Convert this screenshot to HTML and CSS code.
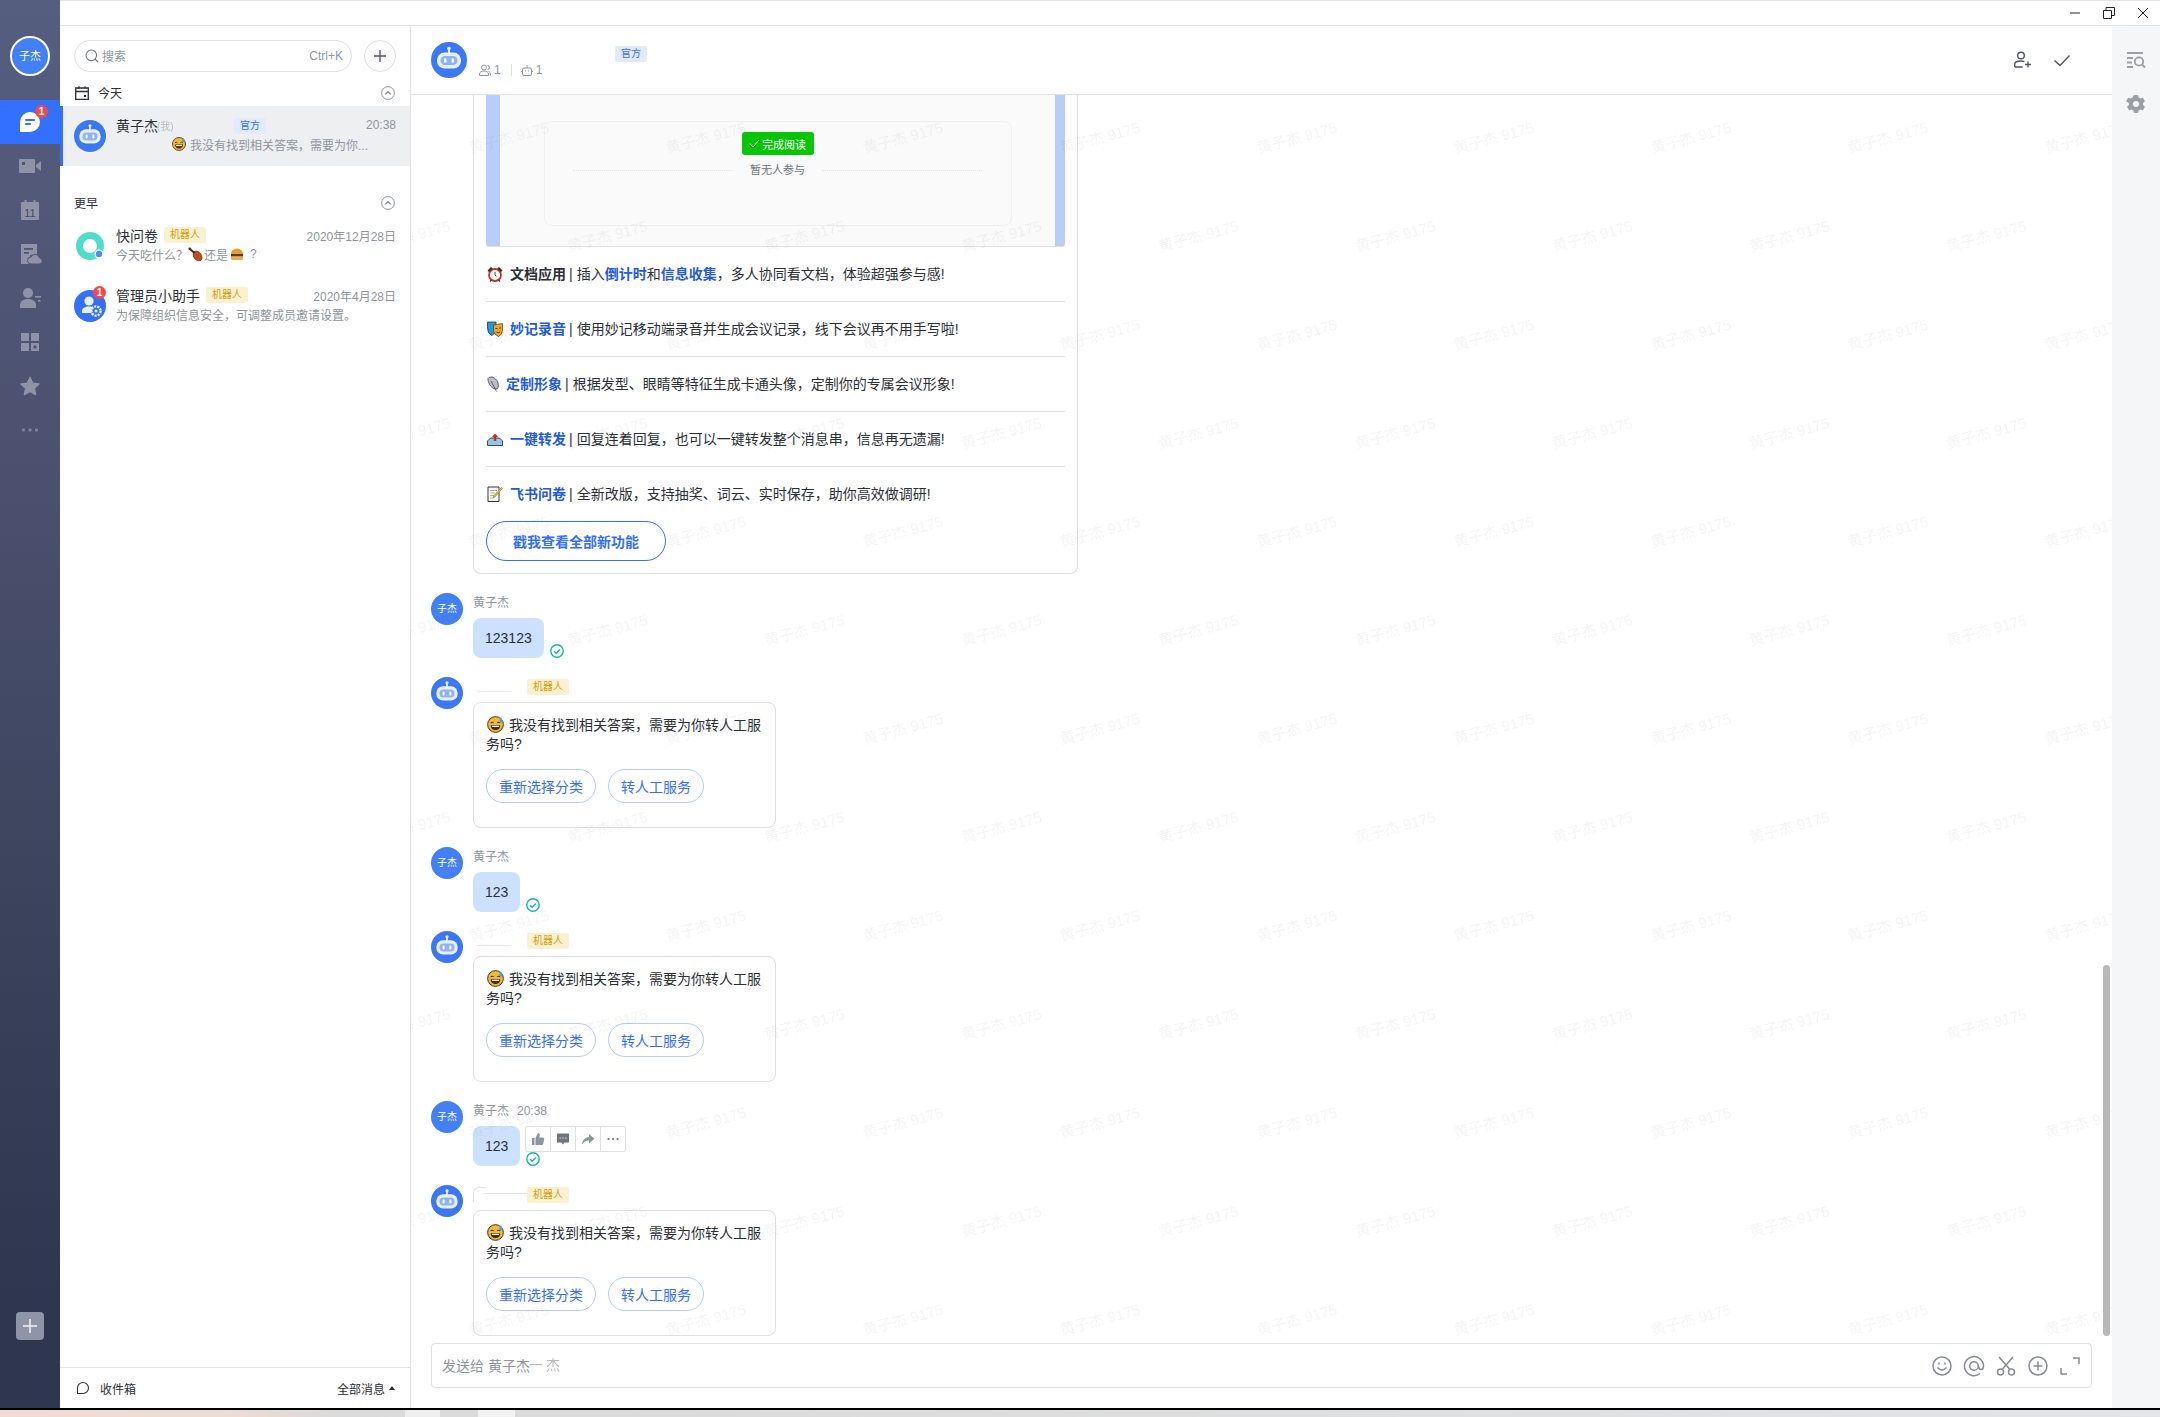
FILE: index.html
```html
<!DOCTYPE html>
<html lang="zh-CN">
<head>
  <meta charset="UTF-8" />
  <title>飞书</title>
  <link rel="stylesheet" href="styles.css">
</head>
<body>
  <!-- shared icons -->
  <svg class="defs" width="0" height="0">
    <defs>
      <symbol id="robot" viewBox="0 0 36 36">
        <circle cx="18" cy="18" r="18" fill="#3b78f2"/>
        <rect x="17" y="6" width="2" height="5" fill="#e8effd"/>
        <circle cx="18" cy="6.5" r="1.8" fill="#e8effd"/>
        <rect x="6" y="10.5" width="24" height="16" rx="7.5" fill="#e8effd"/>
        <rect x="9.5" y="14" width="17" height="9" rx="4.5" fill="#8fb3f7"/>
        <rect x="13" y="16.2" width="2.4" height="4.6" rx="1.2" fill="#fff"/>
        <rect x="20.6" y="16.2" width="2.4" height="4.6" rx="1.2" fill="#fff"/>
      </symbol>
      <symbol id="sweat" viewBox="0 0 16 16">
        <circle cx="8" cy="8" r="7.4" fill="#f7b733" stroke="#3a2c14" stroke-width=".9"/>
        <path d="M3.4 6.6q1.4-1.6 2.8 0M9.6 6.6q1.4-1.6 2.8 0" fill="none" stroke="#3a2c14" stroke-width="1"/>
        <path d="M3.4 8.6h9.2q-.4 4.6-4.6 4.6T3.4 8.6z" fill="#4a2410"/>
        <path d="M4.6 9.2h6.8v1.2H4.6z" fill="#fff"/>
        <path d="M13 1.2q2 2.2 1.6 3.4a1.5 1.5 0 0 1-3 0Q11.400 3.400 13 1.200z" fill="#3da5e8"/>
      </symbol>
      <symbol id="tick" viewBox="0 0 14 14">
        <circle cx="7" cy="7" r="6.2" fill="none" stroke="#14b8a0" stroke-width="1.400"/>
        <path d="M4.200 7.200l2 2 3.600-3.800" fill="none" stroke="#14b8a0" stroke-width="1.400"/>
      </symbol>
      <symbol id="chevron" viewBox="0 0 14 14">
        <circle cx="7" cy="7" r="6.400" fill="none" stroke="#8f959e"/>
        <path d="M4.300 8.300L7 5.500l2.700 2.800" fill="none" stroke="#767b84" stroke-width="1.200"/>
      </symbol>
    </defs>
  </svg>

  <div class="app">
    <aside class="rail">
      <div class="me">子杰</div>
      <nav class="rail-nav">
        <a class="rail-item active">
          <svg width="24" height="24" viewBox="0 0 24 24"><path d="M12 2a10 10 0 0 1 0 20H3a1 1 0 0 1-1-1v-9A10 10 0 0 1 12 2z" fill="#fff"/><rect x="7" y="9" width="10" height="2" rx="1" fill="#3370ff"/><rect x="7" y="13" width="6" height="2" rx="1" fill="#3370ff"/></svg>
          <span class="badge">1</span>
        </a>
        <a class="rail-item">
          <svg width="24" height="24" viewBox="0 0 24 24"><rect x="1" y="5" width="16" height="14" rx="1" fill="#8e93a8"/><rect x="4" y="8" width="3" height="3" fill="#4f5672"/><path d="M18 11l5-4v10l-5-4z" fill="#8e93a8"/></svg>
        </a>
        <a class="rail-item">
          <svg width="24" height="24" viewBox="0 0 24 24"><rect x="3" y="4" width="18" height="18" rx="1" fill="#8e93a8"/><rect x="6.500" y="2" width="2" height="4" fill="#8e93a8"/><rect x="15.500" y="2" width="2" height="4" fill="#8e93a8"/><text x="12" y="18.500" class="cal-num">11</text></svg>
        </a>
        <a class="rail-item">
          <svg width="24" height="24" viewBox="0 0 24 24"><path d="M3 2h16v11H3z" fill="#8e93a8"/><path d="M3 13h9v9H3z" fill="#8e93a8"/><rect x="6" y="6" width="9" height="1.800" fill="#4f5672"/><rect x="6" y="10" width="5" height="1.800" fill="#4f5672"/><path d="M13 22h8a3 3 0 0 0 .5-6 4.500 4.500 0 0 0-8.500-1 3.500 3.500 0 0 0 0 7z" fill="#8e93a8" stroke="#4f5672"/></svg>
        </a>
        <a class="rail-item">
          <svg width="24" height="24" viewBox="0 0 24 24"><circle cx="10" cy="7" r="5" fill="#8e93a8"/><path d="M2 22v-3c0-4 4-6 8-6s8 2 8 6v3z" fill="#8e93a8"/><rect x="17" y="10" width="6" height="1.600" fill="#8e93a8"/><rect x="20" y="14" width="2.500" height="1.600" fill="#8e93a8"/></svg>
        </a>
        <a class="rail-item">
          <svg width="24" height="24" viewBox="0 0 24 24" fill="#8e93a8"><rect x="3" y="3" width="8" height="8"/><rect x="13" y="3" width="8" height="8"/><rect x="3" y="13" width="8" height="8"/><path d="M13 13h8v8h-8zM15.500 15.500v3h3v-3z" fill-rule="evenodd"/></svg>
        </a>
        <a class="rail-item">
          <svg width="24" height="24" viewBox="0 0 24 24"><path d="M12 3.500l2.700 5.800 6.300.7-4.700 4.300 1.300 6.200-5.600-3.200-5.600 3.200 1.300-6.200L3 10l6.300-.7z" fill="#8e93a8" stroke="#8e93a8" stroke-linejoin="round" stroke-width="1.500"/></svg>
        </a>
        <a class="rail-item">
          <svg width="24" height="24" viewBox="0 0 24 24" fill="#7f859c"><rect x="4" y="10.500" width="3" height="3" rx="1"/><rect x="10.500" y="10.500" width="3" height="3" rx="1"/><rect x="17" y="10.500" width="3" height="3" rx="1"/></svg>
        </a>
      </nav>
      <button class="rail-add">
        <svg width="16" height="16" viewBox="0 0 16 16"><path d="M8 1v14M1 8h14" stroke="#f2f3f6" stroke-width="1.500"/></svg>
      </button>
    </aside>

    <div class="window">
      <div class="titlebar">
        <svg width="12" height="12" viewBox="0 0 12 12"><path d="M1 6h10" stroke="#222"/></svg>
        <svg width="12" height="12" viewBox="0 0 12 12"><path d="M.5 3.500h8v8h-8zM3 3.500v-3h8.500v8h-3" fill="none" stroke="#222"/></svg>
        <svg width="12" height="12" viewBox="0 0 12 12"><path d="M1 1l10 10M11 1L1 11" stroke="#222"/></svg>
      </div>

      <div class="content">
        <section class="chats">
          <div class="search-row">
            <div class="search">
              <svg width="14" height="14" viewBox="0 0 14 14"><circle cx="6.300" cy="6.300" r="5.300" fill="none" stroke="#6f747d" stroke-width="1.100"/><path d="M10 10l3 3" stroke="#6f747d" stroke-width="1.100"/></svg>
              <span class="search-label">搜索</span>
              <span class="search-key">Ctrl+K</span>
            </div>
            <button class="plus">
              <svg width="16" height="16" viewBox="0 0 16 16"><path d="M8 2v12M2 8h12" stroke="#555a63" stroke-width="1.400"/></svg>
            </button>
          </div>

          <div class="group-head">
            <svg width="14" height="14" viewBox="0 0 14 14"><path d="M.7 2h12.600v11.300H.7zM.7 5.500h12.600" fill="none" stroke="#2b2f36" stroke-width="1.300"/><rect x="3.300" y=".3" width="1.300" height="2.500" fill="#2b2f36"/><rect x="9.400" y=".3" width="1.300" height="2.500" fill="#2b2f36"/><rect x="9" y="9" width="2" height="2" fill="#2b2f36"/></svg>
            <span class="group-title">今天</span>
            <svg class="group-toggle" width="14" height="14"><use href="#chevron"/></svg>
          </div>
          <div class="chat-row selected">
            <svg class="chat-avatar" width="32" height="32"><use href="#robot"/></svg>
            <div class="chat-body">
              <div class="chat-line">
                <span class="chat-name">黄子杰</span><span class="smudge">(我)</span>
                <span class="tag tag-blue tag-fixed">官方</span>
                <span class="chat-time">20:38</span>
              </div>
              <div class="chat-sub chat-sub-indent">
                <svg width="14" height="14"><use href="#sweat"/></svg>
                <span>我没有找到相关答案，需要为你...</span>
              </div>
            </div>
          </div>

          <div class="group-head later">
            <span class="group-title plain">更早</span>
            <svg class="group-toggle" width="14" height="14"><use href="#chevron"/></svg>
          </div>
          <div class="chat-row">
            <svg class="chat-avatar" width="32" height="32" viewBox="0 0 32 32"><circle cx="16" cy="16" r="10.500" fill="none" stroke="#4fdcc8" stroke-width="7"/><circle cx="25" cy="24" r="4.500" fill="#fff"/><circle cx="25" cy="24" r="3.200" fill="#4c8df6"/></svg>
            <div class="chat-body">
              <div class="chat-line">
                <span class="chat-name">快问卷</span>
                <span class="tag tag-bot">机器人</span>
                <span class="chat-time">2020年12月28日</span>
              </div>
              <div class="chat-sub">
                <span>今天吃什么？</span>
                <svg class="drumstick" width="15" height="15" viewBox="0 0 15 15"><path d="M6 4.500c2-1 4.500-.3 6.500 2 2 2.500 2 5.500.5 6.700-1.500 1.200-4.500.5-6.500-1.700C5 9.800 4.500 6.500 6 4.500z" fill="#b8501c" stroke="#5a2a10" stroke-width=".6"/><path d="M6.500 6L2.500 2.500" stroke="#3a2c20" stroke-width="1.800"/><circle cx="1.800" cy="1.800" r="1.400" fill="#3a2c20"/></svg>
                <span>还是</span>
                <svg class="burger" width="14" height="14" viewBox="0 0 14 14"><path d="M1 7a6 5.500 0 0 1 12 0z" fill="#e3a032"/><rect x="1" y="7" width="12" height="2.500" fill="#6b3515"/><path d="M1 10h12v1.500a1.500 1.500 0 0 1-1.500 1.500h-9A1.500 1.500 0 0 1 1 11.500z" fill="#e8ae4a"/></svg>
                <span class="trail">?</span>
              </div>
            </div>
          </div>
          <div class="chat-row">
            <div class="chat-avatar admin">
              <svg width="32" height="32" viewBox="0 0 32 32"><circle cx="16" cy="16" r="16" fill="#3370ff"/><circle cx="15" cy="11" r="4.600" fill="#e8effd"/><path d="M8 23v-2c0-3 3-4.500 7-4.500s7 1.500 7 4.500v2z" fill="#e8effd"/><circle cx="22" cy="21" r="4.600" fill="#3370ff" stroke="#e8effd" stroke-width="2.400" stroke-dasharray="2.200 1"/><circle cx="22" cy="21" r="1.500" fill="#e8effd"/></svg>
              <span class="badge badge-ring">1</span>
            </div>
            <div class="chat-body">
              <div class="chat-line">
                <span class="chat-name">管理员小助手</span>
                <span class="tag tag-bot">机器人</span>
                <span class="chat-time">2020年4月28日</span>
              </div>
              <div class="chat-sub">
                <span>为保障组织信息安全，可调整成员邀请设置。</span>
              </div>
            </div>
          </div>

          <div class="inbox">
            <svg width="14" height="14" viewBox="0 0 14 14"><path d="M7 1.500a5.500 5.500 0 0 1 0 11H1.500V7A5.500 5.500 0 0 1 7 1.500z" fill="none" stroke="#2b2f36" stroke-width="1.100"/></svg>
            <span class="inbox-label">收件箱</span>
            <span class="inbox-filter">全部消息</span>
            <span class="caret"></span>
          </div>
        </section>

        <main class="conv">
          <header class="conv-head">
            <svg width="36" height="36"><use href="#robot"/></svg>
            <div class="conv-info">
              <div class="conv-title"><span class="tag tag-blue">官方</span></div>
              <div class="conv-meta">
                <svg width="12" height="12" viewBox="0 0 12 12"><circle cx="5" cy="3.500" r="2.500" fill="none" stroke="#8f959e"/><path d="M.5 11.500v-1.500c0-2 2-3 4.500-3s4.500 1 4.500 3v1.500zM8.500 1.500a2 2 0 0 1 0 4M9.500 7.500c1.300.4 2 1.200 2 2.500v1.500" fill="none" stroke="#8f959e"/></svg>
                <span>1</span>
                <i class="meta-sep"></i>
                <svg width="12" height="12" viewBox="0 0 12 12"><rect x="1.500" y="4" width="9" height="7.500" rx="1.500" fill="none" stroke="#8f959e"/><path d="M6 1v3M0 7.500h1.500M10.500 7.500H12M4 7h1M7 7h1" stroke="#8f959e"/></svg>
                <span>1</span>
              </div>
            </div>
            <div class="conv-actions">
              <svg width="20" height="20" viewBox="0 0 20 20"><circle cx="9" cy="5.500" r="3.300" fill="none" stroke="#51565d" stroke-width="1.400"/><path d="M2.700 17v-2.500c0-2.300 2.600-3.500 6-3.500 1.400 0 2.700.2 3.700.7M2.700 17h8M13 14.500h6M16 11.500v6" fill="none" stroke="#51565d" stroke-width="1.400"/></svg>
              <svg width="20" height="20" viewBox="0 0 20 20"><path d="M2.500 10.500l5.500 5 9.500-10" fill="none" stroke="#51565d" stroke-width="1.400"/></svg>
            </div>
          </header>

          <div class="messages">
            <div class="msg">
              <svg class="msg-avatar" width="32" height="32"><use href="#robot"/></svg>
              <div class="msg-main">
                <div class="card news">
                  <div class="preview">
                    <div class="preview-box">
                      <span class="read-btn">
                        <svg width="11" height="11" viewBox="0 0 11 11"><path d="M1 5.500l3 3.500 6-7" fill="none" stroke="#fff"/></svg>
                        完成阅读
                      </span>
                      <div class="preview-note"><i></i><span>暂无人参与</span><i></i></div>
                    </div>
                  </div>
                  <div class="feat">
                    <svg class="feat-icon" width="16" height="16" viewBox="0 0 16 16"><circle cx="8" cy="9" r="6" fill="#fff" stroke="#c8321e" stroke-width="1.800"/><path d="M.5 4.500L4 1l1.800 1.500L2 6zM15.500 4.500L12 1l-1.800 1.500L14 6z" fill="#3a2c20"/><path d="M8 6v3.200l1.500 1" fill="none" stroke="#444"/><path d="M3 15.500l1.500-1.500M13 15.500L11.500 14" stroke="#333" stroke-width="1.200"/></svg>
                    <b>文档应用</b><span class="bar">|</span><span>插入</span><a>倒计时</a><span>和</span><a>信息收集</a><span>，多人协同看文档，体验超强参与感!</span>
                  </div>
                  <div class="feat">
                    <svg class="feat-icon" width="16" height="16" viewBox="0 0 16 16"><path d="M.5 1h8.500v6.500q0 5-4.500 7Q.5 12.500.5 7z" fill="#1e9bd8" stroke="#223" stroke-width=".7"/><path d="M6.500 4l9-1.500V9.500q-.5 4.500-4 6-4.500-1.500-5-6z" fill="#f2a51f" stroke="#532" stroke-width=".7"/><path d="M8.500 7.500h2M12 7h2M9.500 11q1.500 1.500 3.500 0" fill="none" stroke="#532"/></svg>
                    <a>妙记录音</a><span class="bar">|</span><span>使用妙记移动端录音并生成会议记录，线下会议再不用手写啦!</span>
                  </div>
                  <div class="feat">
                    <svg class="feat-icon narrow" width="12" height="16" viewBox="0 0 12 16"><path d="M1 2.500c2-3 7-1.500 9.500 3 1.500 3 1.200 6-.5 7.500-4 1-9.500-5-9-10.500z" fill="#b9bcc0" stroke="#44474c" stroke-width=".8"/><path d="M4 5l5.500 10.500" stroke="#44474c" stroke-width=".8"/></svg>
                    <a>定制形象</a><span class="bar">|</span><span>根据发型、眼睛等特征生成卡通头像，定制你的专属会议形象!</span>
                  </div>
                  <div class="feat">
                    <svg class="feat-icon" width="16" height="16" viewBox="0 0 16 16"><path d="M.5 10l3-3h9l3 3v4.500H.5z" fill="#8ec7ea" stroke="#223" stroke-width=".8"/><path d="M8 2.500l3 3.500H9.200v4H6.800V6H5z" fill="#c92d1f"/></svg>
                    <a>一键转发</a><span class="bar">|</span><span>回复连着回复，也可以一键转发整个消息串，信息再无遗漏!</span>
                  </div>
                  <div class="feat last">
                    <svg class="feat-icon" width="16" height="16" viewBox="0 0 16 16"><path d="M1 1h11v14.500H1z" fill="#fff" stroke="#333"/><path d="M3 4.500h7M3 7h5M3 9.500h4M3 12h3" stroke="#999" stroke-width=".8"/><path d="M14.500 1.500l1 1L8 11l-2 1 .7-2.200z" fill="#f2bd3a" stroke="#7a5a10" stroke-width=".5"/></svg>
                    <a>飞书问卷</a><span class="bar">|</span><span>全新改版，支持抽奖、词云、实时保存，助你高效做调研!</span>
                  </div>
                  <button class="all-btn">戳我查看全部新功能</button>
                </div>
              </div>
            </div>

            <div class="msg">
              <div class="msg-avatar user">子杰</div>
              <div class="msg-main">
                <div class="msg-head"><span class="msg-name">黄子杰</span></div>
                <div class="bubble-row">
                  <div class="bubble">123123</div>
                  <svg width="14" height="14"><use href="#tick"/></svg>
                </div>
              </div>
            </div>

            <div class="msg">
              <svg class="msg-avatar" width="32" height="32"><use href="#robot"/></svg>
              <div class="msg-main">
                <div class="msg-head bot"><i class="name-line"></i><span class="tag tag-bot">机器人</span></div>
                <div class="card reply">
                  <p class="reply-text"><svg width="17" height="17"><use href="#sweat"/></svg>我没有找到相关答案，需要为你转人工服务吗?</p>
                  <div class="reply-btns"><button>重新选择分类</button><button>转人工服务</button></div>
                </div>
              </div>
            </div>

            <div class="msg">
              <div class="msg-avatar user">子杰</div>
              <div class="msg-main">
                <div class="msg-head"><span class="msg-name">黄子杰</span></div>
                <div class="bubble-row">
                  <div class="bubble">123</div>
                  <svg width="14" height="14"><use href="#tick"/></svg>
                </div>
              </div>
            </div>

            <div class="msg">
              <svg class="msg-avatar" width="32" height="32"><use href="#robot"/></svg>
              <div class="msg-main">
                <div class="msg-head bot"><i class="name-line"></i><span class="tag tag-bot">机器人</span></div>
                <div class="card reply">
                  <p class="reply-text"><svg width="17" height="17"><use href="#sweat"/></svg>我没有找到相关答案，需要为你转人工服务吗?</p>
                  <div class="reply-btns"><button>重新选择分类</button><button>转人工服务</button></div>
                </div>
              </div>
            </div>

            <div class="msg">
              <div class="msg-avatar user">子杰</div>
              <div class="msg-main">
                <div class="msg-head"><span class="msg-name">黄子杰</span><span class="msg-time">20:38</span></div>
                <div class="bubble-row">
                  <div class="bubble">123</div>
                  <div class="bubble-side">
                    <div class="msg-tools">
                      <span><svg width="14" height="14" viewBox="0 0 14 14" fill="#8f959e"><rect x="1" y="6" width="2.500" height="7"/><path d="M4.500 6l2.500-5q1.800 0 1.800 2L8.300 5.500H12q1.500 0 1.200 1.500l-1 5q-.2 1-1.200 1H4.500z"/></svg></span>
                      <span><svg width="14" height="14" viewBox="0 0 14 14"><path d="M1 1.500h12v9H8.500L7 12.500l-1.500-2H1z" fill="#6f747d"/><path d="M3.500 6h1.200M6.400 6h1.200M9.300 6h1.200" stroke="#fff"/></svg></span>
                      <span><svg width="14" height="14" viewBox="0 0 14 14"><path d="M8 2l5.500 4.800L8 11.500V8.600Q3.500 8.500 1 12.500 1.500 6 8 5z" fill="#8f959e"/></svg></span>
                      <span><svg width="14" height="14" viewBox="0 0 14 14" fill="#6f747d"><circle cx="2.500" cy="7" r="1.100"/><circle cx="7" cy="7" r="1.100"/><circle cx="11.500" cy="7" r="1.100"/></svg></span>
                    </div>
                    <svg width="14" height="14"><use href="#tick"/></svg>
                  </div>
                </div>
              </div>
            </div>

            <div class="msg">
              <svg class="msg-avatar" width="32" height="32"><use href="#robot"/></svg>
              <div class="msg-main">
                <div class="msg-head bot"><i class="name-line curved"></i><span class="tag tag-bot">机器人</span></div>
                <div class="card reply">
                  <p class="reply-text"><svg width="17" height="17"><use href="#sweat"/></svg>我没有找到相关答案，需要为你转人工服务吗?</p>
                  <div class="reply-btns"><button>重新选择分类</button><button>转人工服务</button></div>
                </div>
              </div>
            </div>

            <!-- tile is 197px, rows staggered by half -->
            <svg class="watermark" width="100%" height="100%">
              <defs>
                <pattern id="wm" width="197" height="197" patternUnits="userSpaceOnUse" patternTransform="translate(48 -7)">
                  <text x="50" y="55" text-anchor="middle" transform="rotate(-15 50 50)">黄子杰 9175</text>
                  <text x="148.500" y="153.500" text-anchor="middle" transform="rotate(-15 148.500 148.500)">黄子杰 9175</text>
                </pattern>
              </defs>
              <rect width="100%" height="100%" fill="url(#wm)"/>
            </svg>
            <div class="scroll-thumb"></div>
          </div>

          <div class="composer">
            <span class="composer-hint">发送给 黄子杰</span><span class="smudge wide">一杰</span>
            <div class="composer-tools">
              <svg width="22" height="22" viewBox="0 0 22 22" fill="none" stroke="#878d96" stroke-width="1.500"><circle cx="11" cy="11" r="9"/><path d="M6.500 12.500q4.500 5 9 0"/><path d="M8 7.500v2M14 7.500v2"/></svg>
              <svg width="22" height="22" viewBox="0 0 22 22" fill="none" stroke="#878d96" stroke-width="1.500"><path d="M17 18.500A9.500 9.500 0 1 1 20.500 11c0 2-1 3.500-2.500 3.500S15.500 13 15.500 11"/><circle cx="11" cy="11" r="4.300"/></svg>
              <svg width="22" height="22" viewBox="0 0 22 22" fill="none" stroke="#878d96" stroke-width="1.500"><circle cx="5.500" cy="17" r="3"/><circle cx="16.500" cy="17" r="3"/><path d="M7 14.500L18 2M15 14.500L4 2"/></svg>
              <svg width="22" height="22" viewBox="0 0 22 22" fill="none" stroke="#878d96" stroke-width="1.500"><circle cx="11" cy="11" r="9"/><path d="M11 6.500v9M6.500 11h9"/></svg>
              <svg width="22" height="22" viewBox="0 0 22 22" fill="none" stroke="#878d96" stroke-width="1.500"><path d="M14 3h6v6M2 13v6h6"/></svg>
            </div>
          </div>
        </main>

        <aside class="tools">
          <svg width="20" height="20" viewBox="0 0 20 20"><path d="M1 2h16M1 7h6M1 11.500h5M1 16h6" stroke="#9a9fa8" stroke-width="1.800"/><circle cx="13" cy="10.500" r="4.200" fill="none" stroke="#9a9fa8" stroke-width="1.800"/><path d="M16 13.500l3 3" stroke="#9a9fa8" stroke-width="2"/></svg>
          <svg width="20" height="20" viewBox="0 0 20 20"><path d="M8 1h4l.6 2.400 1.900 1 2.400-.7 2 3.500-1.800 1.700v2.200l1.800 1.700-2 3.500-2.400-.7-1.900 1L12 19H8l-.6-2.400-1.900-1-2.400.7-2-3.500 1.800-1.700V8.900L.1 7.200l2-3.500 2.400.7 1.900-1zM10 7a3 3 0 1 0 0 6 3 3 0 0 0 0-6z" fill="#9a9fa8" fill-rule="evenodd"/></svg>
        </aside>
      </div>
    </div>
  </div>
  <div class="desktop"></div>
</body>
</html>
```

FILE: styles.css
```css
* {
  box-sizing: border-box;
}

body {
  margin: 0;
  height: 1417px;
  display: flex;
  flex-direction: column;
  overflow: hidden;
  background: #fff;
  color: #2b2f36;
  font-family: "Liberation Sans", "Noto Sans CJK SC", sans-serif;
  font-size: 14px;
}

svg {
  display: block;
  flex: none;
}

button {
  font-family: inherit;
  cursor: pointer;
}

.defs {
  position: absolute;
}

.app {
  flex: 1;
  display: flex;
  min-height: 0;
}

/* left rail */
.rail {
  width: 60px;
  display: flex;
  flex-direction: column;
  align-items: center;
  padding-top: 36px;
  background: linear-gradient(to bottom, #565e80, #4a506d 35%, #2e374d 92%);
}

.me {
  width: 40px;
  height: 40px;
  border: 2px solid #fff;
  border-radius: 50%;
  background: #4380f5;
  color: #fff;
  font-size: 11px;
  line-height: 36px;
  text-align: center;
}

.rail-nav {
  width: 100%;
  margin-top: 24px;
}

.rail-item {
  position: relative;
  display: flex;
  align-items: center;
  justify-content: center;
  height: 44px;
}

.rail-item.active {
  background: #3370ff;
}

.cal-num {
  font-size: 11px;
  text-anchor: middle;
  fill: #454b66;
}

.badge {
  position: absolute;
  top: 5px;
  left: 35px;
  width: 13px;
  height: 13px;
  border-radius: 50%;
  background: #f5474a;
  color: #fff;
  font-size: 10px;
  font-weight: bold;
  line-height: 13px;
  text-align: center;
}

.rail-add {
  display: flex;
  align-items: center;
  justify-content: center;
  width: 28px;
  height: 28px;
  margin: auto 0 68px;
  padding: 0;
  border: none;
  border-radius: 4px;
  background: #8f95a8;
}

/* window */
.window {
  flex: 1;
  min-width: 0;
  display: flex;
  flex-direction: column;
}

.titlebar {
  display: flex;
  align-items: center;
  justify-content: flex-end;
  gap: 22px;
  height: 26px;
  padding-right: 11px;
  border-top: 1px solid #e2e3e6;
  border-bottom: 1px solid #e2e3e6;
}

.content {
  flex: 1;
  min-height: 0;
  display: flex;
}

/* chat list */
.chats {
  position: relative;
  width: 351px;
  display: flex;
  flex-direction: column;
  border-right: 1px solid #e2e3e6;
}

.search-row {
  display: flex;
  gap: 12px;
  padding: 14px 14px 0;
}

.search {
  flex: 1;
  display: flex;
  align-items: center;
  height: 32px;
  padding: 0 8px 0 10px;
  border: 1px solid #dee0e3;
  border-radius: 16px;
  color: #8f959e;
  font-size: 12px;
}

.search-label {
  margin: -1px 0 0 3px;
}

.search-key {
  margin-left: auto;
}

.plus {
  display: flex;
  align-items: center;
  justify-content: center;
  width: 32px;
  height: 32px;
  padding: 0;
  border: 1px solid #dee0e3;
  border-radius: 50%;
  background: #fff;
}

.group-head {
  display: flex;
  align-items: center;
  height: 26px;
  margin-top: 8px;
  padding: 0 15px;
}

.group-head.later {
  margin-top: 24px;
  padding-left: 14px;
}

.group-title {
  margin: -1px 0 0 9px;
  font-size: 12px;
}

.group-title.plain {
  margin-left: 0;
}

.group-toggle {
  margin-left: auto;
}

.chat-row {
  display: flex;
  align-items: center;
  gap: 10px;
  height: 60px;
  padding: 0 14px;
}

.chat-row.selected {
  background: #eeeff1;
  box-shadow: inset 3px 0 0 #3370ff;
}

.chat-avatar {
  flex: none;
}

.admin {
  position: relative;
  width: 32px;
  height: 32px;
}

.badge-ring {
  top: -4px;
  left: 19px;
}

.chat-body {
  flex: 1;
  min-width: 0;
  margin-bottom: 3px;
}

.chat-line {
  position: relative;
  display: flex;
  align-items: center;
  height: 19px;
}

.chat-name {
  font-size: 14px;
}

.smudge {
  margin-left: -1px;
  color: #b9bbc0;
  font-size: 10px;
  filter: blur(0.7px);
}

.smudge.wide {
  margin-top: -3px;
  font-size: 14px;
  letter-spacing: 3px;
}

.tag {
  display: inline-block;
  flex: none;
  height: 16px;
  padding: 0 6px;
  border-radius: 2px;
  font-size: 10px;
  line-height: 16px;
}

.tag-blue {
  background: #e1eaff;
  color: #3370ff;
}

.tag-fixed {
  position: absolute;
  left: 118px;
  top: 2px;
}

.tag-bot {
  margin-left: 6px;
  background: #faf1d1;
  color: #dc9b04;
}

.chat-time {
  margin-left: auto;
  color: #8f959e;
  font-size: 12px;
}

.chat-sub {
  display: flex;
  align-items: center;
  height: 19px;
  color: #8f959e;
  font-size: 12px;
  white-space: nowrap;
}

.chat-sub-indent {
  gap: 4px;
  padding-left: 56px;
}

.drumstick {
  margin-right: 1px;
}

.burger {
  margin-left: 2px;
}

.trail {
  margin-left: 6px;
}

.inbox {
  display: flex;
  align-items: center;
  height: 41px;
  margin-top: auto;
  padding: 0 15px 0 16px;
  border-top: 1px solid #e2e3e6;
  font-size: 12px;
}

.inbox-label {
  margin-left: 10px;
}

.inbox-filter {
  margin-left: auto;
}

.caret {
  width: 0;
  height: 0;
  margin-left: 4px;
  border-right: 3px solid transparent;
  border-bottom: 4px solid #2b2f36;
  border-left: 3px solid transparent;
}

/* conversation */
.conv {
  flex: 1;
  min-width: 0;
  display: flex;
  flex-direction: column;
}

.conv-head {
  display: flex;
  align-items: center;
  height: 69px;
  padding: 0 40px 0 20px;
  border-bottom: 1px solid #e2e3e6;
}

.conv-info {
  margin-left: 10px;
}

.conv-title {
  height: 18px;
  padding: 3px 0 0 138px;
}

.conv-meta {
  display: flex;
  align-items: center;
  gap: 3px;
  height: 18px;
  margin: 2px 0 0 2px;
  color: #8f959e;
  font-size: 12px;
}

.meta-sep {
  width: 1px;
  height: 12px;
  margin: 0 6px 0 7px;
  background: #dee0e3;
}

.conv-actions {
  display: flex;
  gap: 20px;
  margin-left: auto;
}

.messages {
  position: relative;
  flex: 1;
  min-height: 0;
  display: flex;
  flex-direction: column;
  justify-content: flex-end;
  gap: 19px;
  padding: 0 20px 7px;
  overflow: hidden;
}

.msg {
  flex: none;
  display: flex;
  gap: 10px;
}

.msg-avatar {
  flex: none;
}

.msg-avatar.user {
  width: 32px;
  height: 32px;
  border-radius: 50%;
  background: #4380f5;
  color: #fff;
  font-size: 10px;
  line-height: 32px;
  text-align: center;
}

.msg-main {
  min-width: 0;
}

.msg-head {
  display: flex;
  height: 25px;
  padding-top: 2px;
  color: #8f959e;
  font-size: 12px;
  line-height: 16px;
}

.msg-time {
  margin-left: 8px;
}

.msg-head.bot .tag {
  margin-left: 0;
}

.name-line {
  position: relative;
  width: 34px;
  height: 1px;
  margin: 12px 16px 0 4px;
  background: #e9eaec;
}

.name-line.curved {
  width: 44px;
  margin: 6px 0 0 10px;
  background: #e6e7ea;
}

.name-line.curved::before {
  content: "";
  position: absolute;
  top: -6px;
  left: -10px;
  width: 12px;
  height: 14px;
  border-top: 1px solid #dfe0e3;
  border-left: 1px solid #dfe0e3;
  border-radius: 6px 0 0 0;
}

.bubble-row {
  display: flex;
  align-items: flex-end;
  gap: 6px;
}

.bubble {
  height: 40px;
  padding: 0 12px;
  border-radius: 8px;
  background: #cce0ff;
  line-height: 40px;
}

.bubble-side {
  display: flex;
  flex-direction: column;
  align-items: flex-start;
}

.msg-tools {
  display: flex;
  margin-left: -1px;
  border: 1px solid #dee0e3;
  border-radius: 2px;
  background: #fff;
}

.msg-tools span {
  display: flex;
  align-items: center;
  justify-content: center;
  width: 25px;
  height: 24px;
  border-left: 1px solid #dee0e3;
}

.msg-tools span:first-child {
  width: 24px;
  border-left: none;
}

.card {
  border: 1px solid #dee0e3;
  border-radius: 8px;
  background: #fff;
}

/* release notes card */
.news {
  width: 605px;
  padding: 0 12px 12px;
  border-top: none;
}

.preview {
  display: flex;
  align-items: flex-end;
  justify-content: center;
  height: 300px;
  padding-bottom: 20px;
  border-right: 10px solid #b8cef8;
  border-bottom: 1px solid #dee0e3;
  border-left: 14px solid #b8cef8;
  border-radius: 0 0 4px 4px;
  background: #fafafa;
}

.preview-box {
  display: flex;
  flex-direction: column;
  align-items: center;
  width: 468px;
  height: 105px;
  padding-top: 10px;
  border: 1px solid #eff0f5;
  border-radius: 8px;
}

.read-btn {
  display: flex;
  align-items: center;
  justify-content: center;
  gap: 2px;
  width: 72px;
  height: 23px;
  border-radius: 3px;
  background: #06c606;
  color: #fff;
  font-size: 11px;
}

.preview-note {
  display: flex;
  align-items: center;
  justify-content: center;
  gap: 17px;
  width: 100%;
  margin-top: 5px;
  color: #6f747d;
  font-size: 11px;
  line-height: 20px;
}

.preview-note i {
  width: 160px;
  border-top: 1px dotted #e4e5e7;
}

.feat {
  display: flex;
  align-items: center;
  height: 55px;
  border-bottom: 1px solid #dee0e3;
  line-height: 22px;
  white-space: nowrap;
}

.feat.last {
  height: 54px;
  border-bottom: none;
}

.feat-icon {
  margin: 0 7px 0 1px;
}

.feat b {
  font-weight: 600;
}

.feat a {
  color: #245bdb;
  font-weight: 600;
}

.bar {
  margin: 0 4px 0 3px;
}

.all-btn {
  display: block;
  width: 180px;
  height: 40px;
  padding: 0;
  border: 1px solid #3370ff;
  border-radius: 20px;
  background: transparent;
  color: #3370ff;
  font-size: 14px;
  font-weight: 600;
}

/* bot reply card */
.reply {
  width: 303px;
  height: 126px;
  padding: 13px 12px 12px;
}

.reply-text {
  margin: 0;
  line-height: 19px;
}

.reply-text svg {
  display: inline-block;
  margin: 0 5px 0 1px;
  vertical-align: -3px;
}

.reply-btns {
  display: flex;
  gap: 12px;
  margin-top: 15px;
}

.reply-btns button {
  height: 34px;
  padding: 0 12px;
  border: 1px solid #b3ccff;
  border-radius: 17px;
  background: transparent;
  color: #3370ff;
  font-size: 14px;
}

.watermark {
  position: absolute;
  top: 0;
  left: 0;
  pointer-events: none;
}

.watermark text {
  fill: rgba(30, 40, 60, 0.05);
  font-size: 15px;
}

.scroll-thumb {
  position: absolute;
  right: 2px;
  bottom: 7px;
  width: 7px;
  height: 371px;
  border-radius: 4px;
  background: #b8b8b8;
}

.composer {
  display: flex;
  align-items: center;
  height: 45px;
  margin: 0 20px 20px;
  padding: 0 10px;
  border: 1px solid #dee0e3;
  border-radius: 4px;
}

.composer-hint {
  margin-top: -2px;
  color: #8f959e;
}

.composer-tools {
  display: flex;
  gap: 10px;
  margin-left: auto;
}

/* right tool strip */
.tools {
  width: 48px;
  display: flex;
  flex-direction: column;
  align-items: center;
  gap: 23px;
  padding-top: 25px;
  background: #f5f6f7;
}

.desktop {
  flex: none;
  height: 9px;
  border-top: 2px solid #000;
  background:
    linear-gradient(to right, transparent 405px, #eeeeee 405px, #eeeeee 440px, transparent 440px, transparent 478px, #f2f2f2 478px, #f2f2f2 515px, transparent 515px),
    linear-gradient(to right, #efdcd2, #ecdcd3 230px, #dadada 340px, #dcdcdc 900px, #e2e4e8);
}
```
